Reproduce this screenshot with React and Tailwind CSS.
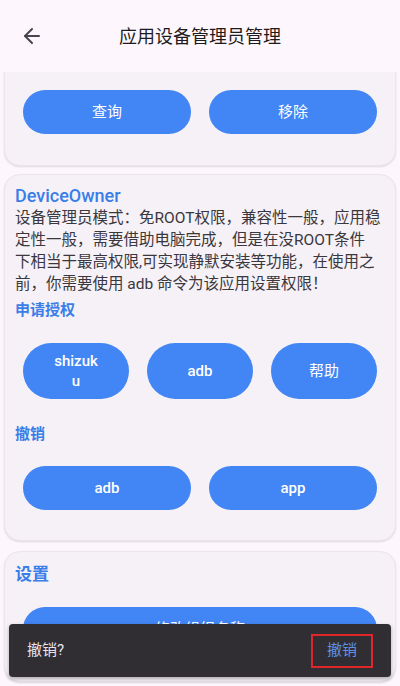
import React from 'react';
import { ArrowLeft } from 'lucide-react';

const font = { fontFamily: 'Roboto, "Noto Sans CJK SC", sans-serif' };

const Btn = ({ children, className = '' }) => (
	<button
		className={`bg-[#4285f4] text-white rounded-full text-[15px] leading-[20px] flex items-center justify-center ${className}`}
	>
		{children}
	</button>
);

const Card = ({ children, className = '' }) => (
	<div
		className={`mx-[4px] bg-[#f6f1f7] rounded-[16px] border border-[#ebe5ec] shadow-[0_1px_2px_rgba(0,0,0,0.12)] ${className}`}
	>
		{children}
	</div>
);

const App = () => {
	return (
		<div
			className="relative w-[400px] h-[686px] overflow-hidden bg-[#fdf7fd] flex flex-col text-[#1d1b20]"
			style={font}
		>
			<div className="relative z-10 h-[72px] shrink-0 bg-[#fdf7fd] flex items-center px-[20px]">
				<ArrowLeft size={24} strokeWidth={2} className="text-[#49454f] w-[24px]" />
				<p className="flex-1 text-center text-[18px] font-normal">应用设备管理员管理</p>
				<div className="w-[24px]" />
			</div>

			<div className="flex flex-col gap-[8px]">
				<Card className="-mt-[20px] pt-[37px] pb-[31px] px-[18px]">
					<div className="grid grid-cols-2 gap-[18px]">
						<Btn className="h-[44px]">查询</Btn>
						<Btn className="h-[44px]">移除</Btn>
					</div>
				</Card>

				<Card className="pt-[10px] pb-[30px]">
					<div className="px-[10px]">
						<p className="text-[#3a7ee8] text-[18px] font-medium leading-[22px]">DeviceOwner</p>
						<p className="text-[15.5px] leading-[22px] text-[#3a373d] whitespace-nowrap">
							设备管理员模式：免ROOT权限，兼容性一般，应用稳
							<br />
							定性一般，需要借助电脑完成，但是在没ROOT条件
							<br />
							下相当于最高权限,可实现静默安装等功能，在使用之
							<br />
							前，你需要使用 adb 命令为该应用设置权限！
						</p>
						<p className="mt-[4px] text-[#3a7ee8] text-[15px] font-bold leading-[22px]">申请授权</p>
					</div>
					<div className="mt-[22px] px-[18px] flex justify-between">
						<Btn className="h-[56px] w-[106px] font-medium">
							shizuk
							<br />u
						</Btn>
						<Btn className="h-[56px] w-[106px] font-medium">adb</Btn>
						<Btn className="h-[56px] w-[106px]">帮助</Btn>
					</div>
					<p className="mt-[24px] px-[10px] text-[#3a7ee8] text-[15px] font-bold leading-[22px]">撤销</p>
					<div className="mt-[21px] px-[18px] grid grid-cols-2 gap-[18px]">
						<Btn className="h-[44px] font-medium">adb</Btn>
						<Btn className="h-[44px] font-medium">app</Btn>
					</div>
				</Card>

				<Card className="mt-[2px] pt-[10px] pb-[30px]">
					<p className="px-[10px] text-[#3a7ee8] text-[17px] font-bold leading-[24px]">设置</p>
					<div className="mt-[21px] px-[18px]">
						<Btn className="h-[44px] w-full">修改组织名称</Btn>
					</div>
				</Card>
			</div>

			<div className="absolute left-[9px] right-[9px] bottom-[9px] h-[53px] z-20 bg-[#302e33] rounded-[4px] shadow-[0_2px_4px_rgba(0,0,0,0.3)] flex items-center justify-between pl-[18px] pr-[18px]">
				<span className="text-[#e8e3ea] text-[15px]">撤销?</span>
				<span className="w-[62px] h-[34px] border-2 border-[#e0262b] flex items-center justify-center text-[#5d91e6] text-[15px]">
					撤销
				</span>
			</div>
		</div>
	);
};

export default App;
